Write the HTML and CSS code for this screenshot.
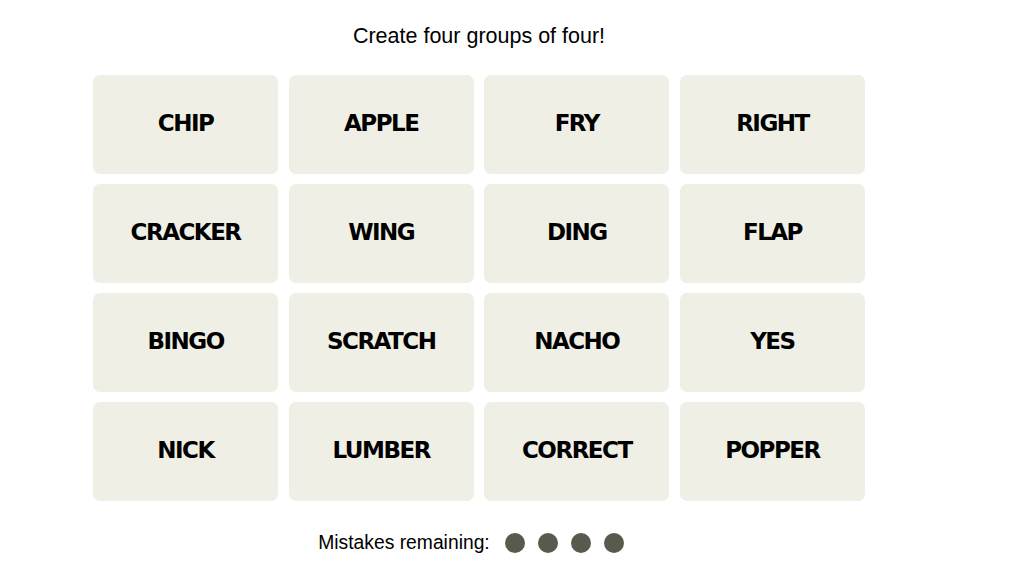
FILE: index.html
```html
<!DOCTYPE html>
<html>
<head>
<meta charset="utf-8">
<link rel="stylesheet" href="styles.css">
</head>
<body>
<main class="game">
  <h2 class="prompt">Create four groups of four!</h2>
  <div class="board">
    <div class="tile">CHIP</div>
    <div class="tile">APPLE</div>
    <div class="tile">FRY</div>
    <div class="tile">RIGHT</div>
    <div class="tile">CRACKER</div>
    <div class="tile">WING</div>
    <div class="tile">DING</div>
    <div class="tile">FLAP</div>
    <div class="tile">BINGO</div>
    <div class="tile">SCRATCH</div>
    <div class="tile">NACHO</div>
    <div class="tile">YES</div>
    <div class="tile">NICK</div>
    <div class="tile">LUMBER</div>
    <div class="tile">CORRECT</div>
    <div class="tile">POPPER</div>
  </div>
  <div class="mistakes">
    <span class="mistakes-label">Mistakes remaining:</span>
    <span class="dots">
      <span class="dot"></span>
      <span class="dot"></span>
      <span class="dot"></span>
      <span class="dot"></span>
    </span>
  </div>
</main>
</body>
</html>
```
FILE: styles.css
```css
html, body {
  margin: 0;
  padding: 0;
  background: #ffffff;
}
body {
  font-family: "Liberation Sans", Arial, sans-serif;
  color: #000;
}
.game {
  width: 772px;
  margin-left: 93px;
  display: flex;
  flex-direction: column;
  align-items: center;
}
.prompt {
  margin: 0;
  padding-top: 22px;
  height: 75px;
  box-sizing: border-box;
  font-size: 21.5px;
  font-weight: 400;
  line-height: 28px;
}
.board {
  width: 772px;
  display: grid;
  grid-template-columns: repeat(4, 1fr);
  grid-auto-rows: 98.5px;
  gap: 10.5px;
}
.tile {
  background: #efefe6;
  border-radius: 7px;
  display: flex;
  align-items: center;
  justify-content: center;
  padding-bottom: 2px;
  font-family: "DejaVu Sans", sans-serif;
  font-size: 23px;
  font-weight: 700;
  letter-spacing: -1.5px;
}
.mistakes {
  margin-top: 31px;
  display: flex;
  align-items: center;
  gap: 15px;
  margin-right: 16px;
}
.mistakes-label {
  font-size: 19.3px;
  line-height: 22px;
}
.dots {
  display: flex;
  gap: 13px;
}
.dot {
  width: 20px;
  height: 20px;
  border-radius: 50%;
  background: #5a594e;
}
```
